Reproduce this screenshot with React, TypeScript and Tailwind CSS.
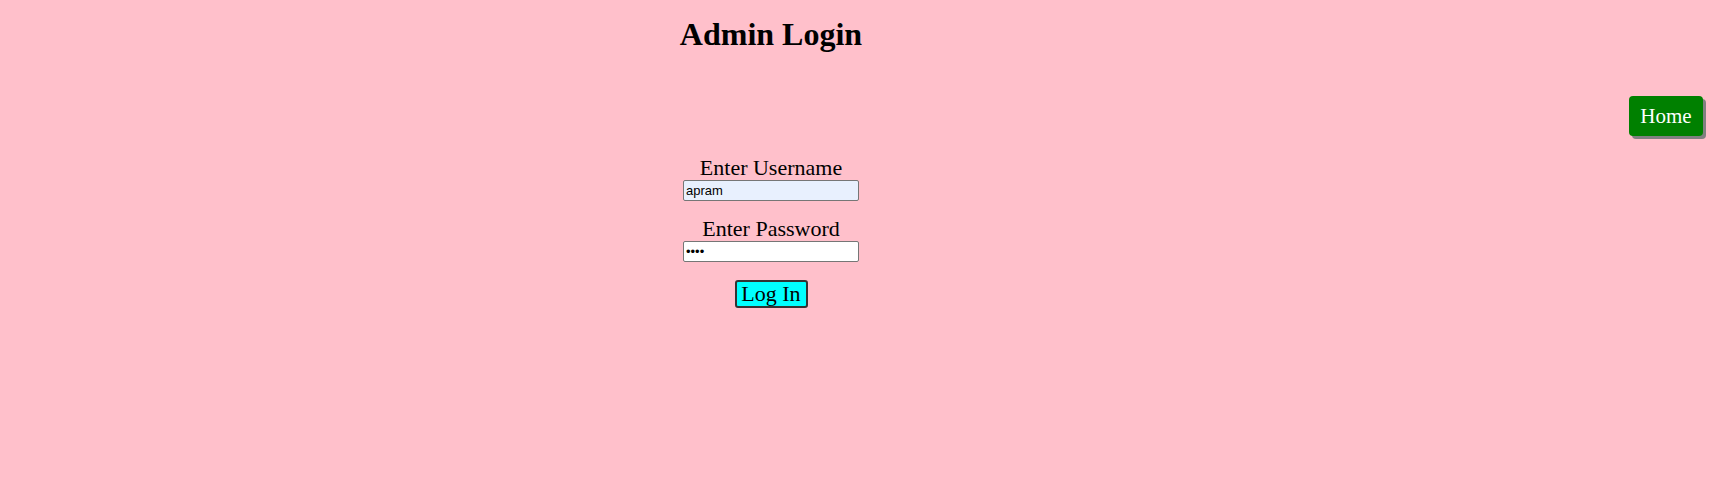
export default function App() {
  return (
    <div className="min-h-[487px] bg-[#ffc0cb] font-['Liberation_Serif',serif] text-black">
      <div className="flex">
        <div className="w-[1542px] flex flex-col items-center">
          <h1 className="mt-[16px] text-[32px] leading-[37px] font-bold">Admin Login</h1>
          <form className="mt-[103px] flex flex-col items-center" onSubmit={(e) => e.preventDefault()}>
            <label htmlFor="username" className="text-[22px] leading-[24px]">Enter Username</label>
            <input
              id="username"
              defaultValue="apram"
              className="w-[176px] h-[21px] px-[2px] bg-[#e8f0fe] border border-[#767676] rounded-[2px] font-['Liberation_Sans',Arial,sans-serif] text-[13px] text-black outline-none"
            />
            <label htmlFor="password" className="mt-[16px] text-[22px] leading-[24px]">Enter Password</label>
            <input
              id="password"
              type="password"
              defaultValue="1234"
              className="w-[176px] h-[21px] px-[2px] bg-white border border-[#767676] rounded-[2px] font-['Liberation_Sans',Arial,sans-serif] text-[13px] text-black outline-none"
            />
            <button
              type="submit"
              className="mt-[18px] w-[73px] h-[28px] bg-[#00ffff] border-2 border-[#333] rounded-[3px] text-[22px] leading-[22px]"
            >
              Log In
            </button>
          </form>
        </div>
        <div className="mt-[96px]">
          <a
            href="#"
            className="ml-[87px] flex items-center justify-center pt-[2px] w-[74px] h-[40px] bg-[#008000] text-white text-[21px] rounded-[4px] shadow-[3px_3px_0_#808080]"
          >
            Home
          </a>
        </div>
      </div>
    </div>
  );
}
